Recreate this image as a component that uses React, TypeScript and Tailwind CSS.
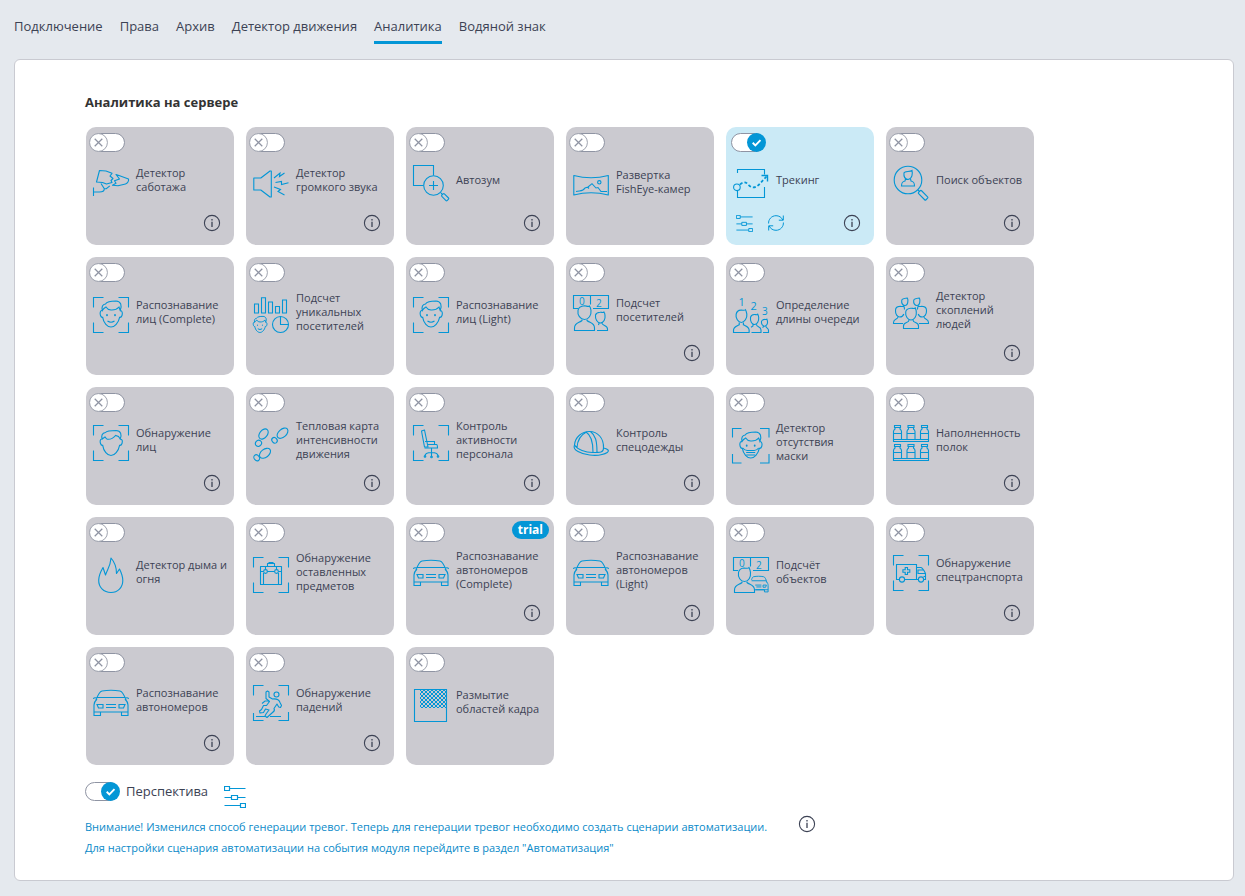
import React, { useState } from "react";
import clsx from "clsx";

interface Detector {
  id: string;
  title: string;
  icon: React.ReactNode;
  info?: boolean;
  trial?: boolean;
}

/* Shared icon parts */

const Corners = () => (
  <path d="M.5 10.500V.5h10M25.500.5h10v10M35.500 25.500v10h-10M10.500 35.500H.5v-10" />
);

const FaceOutline = () => (
  <>
    <path d="M9.300 13.500C7 13 6.800 16.500 7.500 18.500c.5 1.500 1.300 2 2.200 1.800C10.500 26 14.500 30 18 30s7.500-4 8.600-9.700c1.200.2 2-.5 2.400-1.800.8-2.500.2-5-1.800-5" />
    <path d="M9.300 13.500C8.500 10 9.500 7.300 12.500 7 14 4.500 18 4 23 4c5 .3 6.200 4.500 4.200 9.500L26 10c-2 2.300-5 3.200-8 3-3-.2-4-1.300-5-3-1.200.6-2.700 1.700-3.700 3.500z" />
  </>
);

const FaceDetails = () => (
  <>
    <path d="M14 18v.3M22 18v.3" strokeWidth="1.800" strokeLinecap="round" />
    <path d="M14.500 24q3.500 2.500 7 0" />
  </>
);

// Head and shoulders, 16 x 25 units
const Person = () => (
  <>
    <path d="M3 5.500C2.300 9.500 5 14 8 14s5.800-4.500 5.300-8.500C13 3.800 13 2.500 12 .8 11 2 9.500 1 7.500 1.200 5 1.300 3.500 3 3 5.500z" />
    <path d="M6 14v2.500C3 18 .5 18.500.5 22v2.500h15V22c0-3.500-2.500-4-5.500-5.500V14" />
  </>
);

const Car = () => (
  <>
    <path d="M3 15C5 9.500 6.500 6.500 9 6c6-1 12-1 18 0 2.500.5 4 3.500 6 9M4.500 12.500h27M.5 14c0-1.500 2.500-1.500 3.500-.5M35.500 14c0-1.500-2.500-1.500-3.500-.5" />
    <path d="M4 14C2 16 1 17.500 1 20v10.500h6.500V27h21v3.500H35V20c0-2.500-1-4-3-6M1 27h34" />
    <path d="M4 19.500h6v3.500H5.500zM32 19.500h-6v3.500h4.500zM13 19.500h10M13 22.500h10" />
  </>
);

const Bottle = () => (
  <path d="M1.500.5h6v2h-6zM2 2.500v1.500C1 4.800.5 5.500.5 6.500v8h8v-8c0-1-.5-1.700-1.500-2.500V2.500M.5 8.500h8" />
);

const CounterBoard = () => (
  <>
    <path d="M5 13.500H.5V.5h35v13H20M17.500.5v9" />
    <text x="6" y="10" fontSize="10" fill="currentColor" stroke="none">0</text>
    <text x="23" y="12" fontSize="10" fill="currentColor" stroke="none">2</text>
  </>
);

const icons = {
  sabotage: (
    <>
      <path d="M6.500 5.500 13 6l6 2.300-2 2.700 3 2.500-2 2 1 2-5.500 1.500-4-1.500-6-.5z" strokeLinejoin="round" />
      <path d="M23 9.500l3 1 9.500 3.500c.5 2-1 4.500-3 5L25 20.800l-5.500-.5 3.500-2-1.500-2.500 5-1.800z" strokeLinejoin="round" />
      <path d="M.5 22.500v8.500M.5 27h6c3 0 4.800-1.300 4.800-3.300L8 18.500M11.300 23.700h2l3.500-2.800" />
    </>
  ),
  sound: (
    <>
      <path d="M.8 13h7L17 6h1.300v26H17l-9.200-7h-7z" strokeLinejoin="round" />
      <path d="M21 13l6-5-.5 3.500L31.500 8M22.500 17.500l6-1v3l7-1.700M21 22l6.500 2.500-2.500 2 6.500 3.500" />
    </>
  ),
  zoom: (
    <>
      <path d="M10.500 20.500H.5V.5h20v10" />
      <circle cx="20.500" cy="20.500" r="9.800" />
      <path d="M20.500 16v9M16 20.500h9M28 28l1.500 1.500" />
      <rect x="28.500" y="30.200" width="7.500" height="3.600" rx=".8" transform="rotate(45 32 32)" />
    </>
  ),
  fisheye: (
    <>
      <path d="M.8 8.500q17.200 4.500 34.500 0v19.500q-17.300-4.500-34.500 0z" strokeLinejoin="round" />
      <circle cx="26.300" cy="15.300" r="1.700" />
      <path d="M3 24.500c5-1 7 0 9-3.500l3-1 4-3.300 4 4.300 2-.5 3 4h6M14.500 20l1.500 1.500" />
    </>
  ),
  tracking: (
    <>
      <path d="M4.500 8V4.500h27v5M4.500 26v6.500h27V22" />
      <circle cx="3.900" cy="22.300" r="3.300" />
      <path d="M7 19.500c4-3.500 6-2.500 9 .8 3 3 7 3 11-1.800L34 11" strokeWidth="1.700" strokeDasharray="3 2" />
      <path d="M28.500 10.500h6v6" strokeWidth="1.400" />
    </>
  ),
  search: (
    <>
      <circle cx="15" cy="15" r="13.800" />
      <path d="M11 8c0-2 6-1 8-2.500.8 3 .3 8.500-4 9-3.500-.5-4.300-4-4-6.500zM12.500 14l-.5 2c-2 .5-3.500 1-3.500 5h13c0-4-1.500-4.500-3.500-5l-.5-2M25 25l1.500 1.500" />
      <rect x="25" y="28" width="10.500" height="4.200" rx="1" transform="rotate(45 30 30)" />
    </>
  ),
  face: (
    <>
      <Corners />
      <FaceOutline />
      <FaceDetails />
    </>
  ),
  faceDetect: (
    <>
      <Corners />
      <path d="M9.300 14c-2.300-.5-2.500 2.500-1.800 4.500.5 1.500 1.300 2 2.200 1.800C10.500 26 14.500 30.500 18 30.500s7.500-4.500 8.600-10.200c1.200.2 2-.5 2.400-1.800.8-2.500.2-4.500-1.800-4.500" />
      <path d="M9.300 14C8 11 9 8 12.500 7.500 14 5.500 18 5.500 23 5.500c5 .3 6 4 4.200 8.500l-1.700-2.500-3-1c-2 2.500-5 4-8 3.800-1.500-.3-1.500-1.500-2.500-2.300z" />
    </>
  ),
  unique: (
    <>
      <path d="M1.500 7h4v9h-4zM8.500.8h4V16h-4zM15.500 5h4v11h-4zM22.500 9.500h4V16h-4zM29.500 3h4v13h-4z" />
      <g transform="translate(-4.200 16.900) scale(.62)" strokeWidth="1.600">
        <FaceOutline />
        <FaceDetails />
      </g>
      <circle cx="27.500" cy="27.500" r="8" />
      <path d="M27.500 19.500v8h8" />
    </>
  ),
  visitors: (
    <>
      <CounterBoard />
      <path d="M5 15.500c-.8 4.500 2.300 9 6.500 9s7-4.500 6.500-9c-.3-2-.5-3-1.500-4.500-1 1-3 0-5-.200-3.500.2-6 1.700-6.500 4.700z" />
      <path d="M9 24.500v1C6.500 28 1.500 27.500 1.500 33v2.500h20V33c0-5.500-5-5-7.500-7.500v-1" />
      <path d="M22.500 20c-.5 4 1.800 8 5 8s5-4 4.500-7.500c0-1.500-.3-2.500-1-3.500-1 1-2.500 0-4 .3-2.500.2-4 1.200-4.500 2.700zM26 28l-.5 2M29 28c0 3 5.500 2 5.500 6v1.500H24" />
    </>
  ),
  queue: (
    <>
      <text x="5.500" y="8.500" fontSize="11" fill="currentColor" stroke="none">1</text>
      <text x="17.500" y="13" fontSize="11" fill="currentColor" stroke="none">2</text>
      <text x="29" y="18" fontSize="10" fill="currentColor" stroke="none">3</text>
      <g transform="translate(0 12) scale(1.040 .96)">
        <Person />
      </g>
      <path d="M17.500 20.500c-.5 4 1.500 7 4 7s4.500-3 4.200-7c-.1-1.500-.2-2-.9-3.300-.8 1-2 .2-3.500.3-2.200.1-3.500 1.200-3.800 3zM20 27.500v1.500l-2 1.200M23.500 27.500c0 3 4.500 1.500 4.500 5.500v2.500h-9.500" />
      <path d="M28.500 24.500c-.3 2.500 1.200 4.700 3 4.700s3.300-2.200 3-4.700c-.1-1.200-.2-1.500-.6-2.300-.6.6-1.400.1-2.400.2-1.600.1-2.700.8-3 2.100zM30.500 29.200l-.8 1.500M33 29.200c0 2 2.500 1.800 2.500 4v2.300H30" />
    </>
  ),
  crowd: (
    <>
      <path d="M8.700 5.500c-.4 3 1.300 5 3 5s3.200-2 3.200-5c0-1-.2-1.800-.6-2.500-3 .3-5.300.5-5.600 2.500zM20.700 5.500c-.4 3 1.300 5 3 5s3.200-2 3.200-5c0-1-.2-1.800-.6-2.500-3 .3-5.300.5-5.600 2.500z" />
      <path d="M11.500 14.500c0-1.500-.2-2.500-.7-3.500-1 1-2.500.2-4.300.4-2.500.2-4 1.600-4 4.100-.2 3.800 1.800 6.500 4.300 6.500 2 0 3.300-1 4-3M24.500 14.500c0-1.500.2-2.500.7-3.500 1 1 2.500.2 4.300.4 2.500.2 4 1.600 4 4.100.2 3.800-1.800 6.500-4.300 6.500-2 0-3.300-1-4-3" />
      <path d="M5 22c0 2.500-4.500 1.500-4.500 5.500v1H10M31 22c0 2.500 4.500 1.500 4.500 5.500v1H26" />
      <path d="M12.700 17c-.5 4 2 8 5.300 8s5.800-4 5.300-8c0-1.500-.3-2.500-1-4-1 1-2.500.2-4.500.3-3 .2-4.800 1.500-5.100 3.700zM16 25c0 3.500-5.500 1.500-5.500 6v2.500h15V31c0-4.500-5.500-2.500-5.500-6" />
    </>
  ),
  heatmap: (
    <>
      <ellipse cx="10.500" cy="9" rx="5.800" ry="3.800" transform="rotate(-50 10.500 9)" />
      <ellipse cx="5.500" cy="18.300" rx="3.200" ry="2.900" transform="rotate(-50 5.500 18.300)" />
      <ellipse cx="29.500" cy="8.200" rx="6.400" ry="3.900" transform="rotate(-42 29.500 8.200)" />
      <ellipse cx="21.500" cy="15.300" rx="3" ry="2.500" transform="rotate(50 21.500 15.300)" />
      <ellipse cx="12" cy="28.300" rx="6.300" ry="4" transform="rotate(-38 12 28.300)" />
      <ellipse cx="3.700" cy="32.800" rx="3.200" ry="2.600" transform="rotate(50 3.700 32.800)" />
    </>
  ),
  chair: (
    <>
      <Corners />
      <path d="M8.500 6l3-1 3.500 17h-3.500z" strokeLinejoin="round" />
      <path d="M12 16.500h9.500v3h-7.500M14 19.500h9.500q1 0 1 3.500H11.500M18.500 23v4.500M12 31c0-3 4-3.500 6.500-3.500S25 28 25 31M18.500 27.500v4" />
      <circle cx="12" cy="31.500" r=".8" />
      <circle cx="18.500" cy="32" r=".8" />
      <circle cx="25" cy="31.500" r=".8" />
    </>
  ),
  helmet: (
    <>
      <path d="M1.500 20C2 12 9 6.500 16.500 6.500c8 0 14.500 6.500 14 16.500M1.500 20c-1 2.500.5 5 3.500 6.500 6 3.500 17 5 24 3 4.500-1 7.500-3 6-4.500-1.200-1.200-3-1.500-4.500-2" />
      <path d="M1.500 20c3 4.500 11 7.500 18 7.500 4 0 6.500 0 8.500-.5 1.500-.3 2.500-2 2.500-4M13 7c5 3 7 8.500 7 20M17.500 6.500c5 4 6.500 9 6.500 21M4 22.500C4.500 15 8.500 9.500 13.500 7" />
    </>
  ),
  mask: (
    <>
      <path d="M-.5 10.500v-9h9M27 1.500h9v9M36 27v9h-9M8.500 36h-9v-9" />
      <g transform="translate(-.3 1)">
        <FaceOutline />
        <path d="M10 20c1.500 1.800 3 2.500 4.500 2.500h7c1.500 0 3-.7 4.500-2.500M13.500 24.500h9M13.500 27h9" />
        <path d="M14 17.500v.3M22 17.500v.3" strokeWidth="1.800" strokeLinecap="round" />
      </g>
    </>
  ),
  shelves: (
    <>
      {[0, 19].map((y) => (
        <g key={y} transform={`translate(0 ${y})`}>
          <Bottle />
          <g transform="translate(13.500 0)">
            <Bottle />
          </g>
          <g transform="translate(27 0)">
            <Bottle />
          </g>
          <path d="M.5 14.500h35v2H.5z" />
        </g>
      ))}
    </>
  ),
  fire: (
    <path
      d="M18 35.500c-7.500 0-12.500-5.500-12.300-12.500.1-5 2-8.500 4.300-12.500l2.500 7.500c2-6 5-9 5.500-17 4 4.500 5.500 9.500 5.500 15.500l3-4.500c2 4 3.300 7 3.300 11.500 0 7-5 12-11.800 12z"
      strokeLinejoin="round"
    />
  ),
  luggage: (
    <>
      <Corners />
      <path d="M7.500 9.500h21v18h-21zM14.500 9.500v-3h7v3M15.500 5.500h5M12.500 9.500v3M23.500 9.500v3M10.500 16v11.500M25.500 16v11.500" strokeLinejoin="round" />
      <path d="M7.500 14.500h3M14.500 14.500h7M25.500 14.500h3" />
      <circle cx="12.500" cy="14.500" r="1.900" />
      <circle cx="23.500" cy="14.500" r="1.900" />
    </>
  ),
  car: <Car />,
  objects: (
    <>
      <CounterBoard />
      <path d="M5.500 15.500c-.8 4.500 2 9 6 9s6.500-4.500 6-9c-.3-2-.5-3-1.500-5-1 1.500-3 .5-5 .5-3.200.2-5 1.500-5.500 4.500z" />
      <path d="M9 24.500v1c-2.500 2.500-7.500 2-7.500 7.500v2.500h20V33c0-5.500-5-5-7.500-7.500v-1" />
      <g transform="translate(15.500 16) scale(.56 .62)" strokeWidth="1.600">
        <path d="M5.500 11C6.500 7.500 7.500 6.300 9 6c6-1 12-1 18 0 2.500.5 4 3.500 6 9.500M5.500 12.500h26" />
        <path d="M32 14c2 2 3 3.500 3 6v10.500h-6.500V27H12M12 27h23M32 19.500h-6v3.500h4.500zM12 19.500h11M14 22.500h9" />
      </g>
    </>
  ),
  ambulance: (
    <>
      <Corners />
      <path d="M6 24.500H3.500v-15h20v15H12M23.500 12.500H28c2 .5 3.500 4 4.500 6v6h-1.500M25 24.500h-1.500M32.500 18.500h-7.500v-3.500h5.500M32.500 21.500h-2" />
      <circle cx="9" cy="24.500" r="2.600" />
      <circle cx="28" cy="24.500" r="2.600" />
      <path d="M12.200 12.500h2.300v2.300h2.300v2.400h-2.300v2.300h-2.300v-2.300H9.900v-2.400h2.300z" />
    </>
  ),
  fall: (
    <>
      <path d="M.5 10.500V.5h10M25.500.5h10v10M35.500 27v8.500h-10M10.500 35.500H.5V28M3 31.500h9M17 31.500h11" />
      <circle cx="23.500" cy="9.500" r="2.500" />
      <path
        d="M13 7l1.500-1 1.500 1v5l3.500 2c4.500-.5 6.500.5 7.500 3.500l1.500 3-1 2-1.800-.5-1.700-3-3 4.500c1 1.500 0 3-1.500 4l-5.500 5-2-1.500 1-2 3-4-3.500-1-2 3.500-3.500.5-.5-2 2-1.500 2-4h3l3-4-3.500-3z"
        strokeLinejoin="round"
      />
      <path d="M9 18.500l3-2.500h4" />
    </>
  ),
  blur: (
    <>
      <defs>
        <pattern id="checks" width="4" height="4" patternUnits="userSpaceOnUse">
          <path d="M0 0h2v2H0zM2 2h2v2H2z" fill="currentColor" stroke="none" />
        </pattern>
      </defs>
      <rect x="7" y="3" width="26" height="18" fill="url(#checks)" stroke="none" />
      <path d="M1.500 2.500h32v32h-32z" />
    </>
  ),
};

const detectors: Detector[] = [
  { id: "sabotage", title: "Детектор саботажа", icon: icons.sabotage, info: true },
  { id: "sound", title: "Детектор громкого звука", icon: icons.sound, info: true },
  { id: "zoom", title: "Автозум", icon: icons.zoom, info: true },
  { id: "fisheye", title: "Развертка FishEye-камер", icon: icons.fisheye },
  { id: "tracking", title: "Трекинг", icon: icons.tracking, info: true },
  { id: "search", title: "Поиск объектов", icon: icons.search, info: true },
  { id: "face-complete", title: "Распознавание лиц (Complete)", icon: icons.face },
  { id: "unique", title: "Подсчет уникальных посетителей", icon: icons.unique },
  { id: "face-light", title: "Распознавание лиц (Light)", icon: icons.face },
  { id: "visitors", title: "Подсчет посетителей", icon: icons.visitors, info: true },
  { id: "queue", title: "Определение длины очереди", icon: icons.queue },
  { id: "crowd", title: "Детектор скоплений\nлюдей", icon: icons.crowd, info: true },
  { id: "face-detect", title: "Обнаружение\nлиц", icon: icons.faceDetect, info: true },
  { id: "heatmap", title: "Тепловая карта интенсивности движения", icon: icons.heatmap, info: true },
  { id: "staff", title: "Контроль активности персонала", icon: icons.chair, info: true },
  { id: "workwear", title: "Контроль спецодежды", icon: icons.helmet, info: true },
  { id: "mask", title: "Детектор отсутствия\nмаски", icon: icons.mask },
  { id: "shelves", title: "Наполненность полок", icon: icons.shelves, info: true },
  { id: "fire", title: "Детектор дыма и огня", icon: icons.fire },
  { id: "luggage", title: "Обнаружение оставленных предметов", icon: icons.luggage },
  { id: "plates-complete", title: "Распознавание автономеров (Complete)", icon: icons.car, info: true, trial: true },
  { id: "plates-light", title: "Распознавание автономеров (Light)", icon: icons.car, info: true },
  { id: "objects", title: "Подсчёт\nобъектов", icon: icons.objects },
  { id: "special", title: "Обнаружение спецтранспорта", icon: icons.ambulance, info: true },
  { id: "plates", title: "Распознавание автономеров", icon: icons.car, info: true },
  { id: "fall", title: "Обнаружение падений", icon: icons.fall, info: true },
  { id: "blur", title: "Размытие областей кадра", icon: icons.blur },
];

const tabs = ["Подключение", "Права", "Архив", "Детектор движения", "Аналитика", "Водяной знак"];

interface ToggleProps {
  id: string;
  checked: boolean;
  onChange: () => void;
}

function Toggle({ id, checked, onChange }: ToggleProps) {
  return (
    <span className="relative block h-[19px] w-[34px] shrink-0">
      <input
        id={id}
        type="checkbox"
        checked={checked}
        onChange={onChange}
        className="block h-[19px] w-[34px] cursor-pointer appearance-none rounded-full border border-[#8f94a3] bg-white"
      />
      <svg
        viewBox="0 0 20 20"
        className={clsx(
          "pointer-events-none absolute top-0 size-[19px]",
          checked ? "-right-px" : "-left-0.5"
        )}
        fill="none"
      >
        {checked ? (
          <>
            <circle cx="10" cy="10" r="10" fill="#0396d6" />
            <path d="M6 10.300l2.800 2.700L14.200 7.500" stroke="#fff" strokeWidth="2" />
          </>
        ) : (
          <>
            <circle cx="10" cy="10" r="9.400" fill="#fff" stroke="#9a9eab" />
            <path d="M6 6l8 8M14 6l-8 8" stroke="#8f94a3" strokeWidth="1.300" />
          </>
        )}
      </svg>
    </span>
  );
}

function InfoButton() {
  return (
    <button type="button" aria-label="Информация" className="cursor-pointer text-[#3c4254]">
      <svg viewBox="0 0 16 16" className="size-4 overflow-visible" fill="none" stroke="currentColor">
        <circle cx="8" cy="8" r="7.600" strokeWidth="1.100" />
        <path d="M8 6.800V12M8 4v1.500" strokeWidth="1.300" />
      </svg>
    </button>
  );
}

function SettingsButton({ className }: { className: string }) {
  return (
    <button type="button" aria-label="Настройки" className="cursor-pointer text-[#0396d6]">
      <svg viewBox="0 0 22 22" className={className} fill="none" stroke="currentColor" strokeWidth="1.200">
        <path d="M.5.5h5v4h-5zM5.500 2.500h16M.5 11.500h7M7.500 9.500h6v4h-6zM13.500 11.500h8M.5 19.500h16M16.500 17.500h5v4h-5z" />
      </svg>
    </button>
  );
}

function RefreshButton() {
  return (
    <button type="button" aria-label="Обновить" className="cursor-pointer text-[#0396d6]">
      <svg viewBox="0 0 16 16" className="size-4 overflow-visible" fill="none" stroke="currentColor">
        <path d="M.6 8.500C.3 4.500 3.500.7 8 .7c3 0 5.500 1.500 6.800 4.300M15.400 7.500c.3 4-2.900 7.800-7.400 7.800-3 0-5.500-1.500-6.800-4.300M15.300.5v4.700h-4.500M.7 15.500v-4.700h4.500" />
      </svg>
    </button>
  );
}

interface DetectorCardProps {
  detector: Detector;
  enabled: boolean;
  onToggle: () => void;
}

function DetectorCard({ detector, enabled, onToggle }: DetectorCardProps) {
  return (
    <div
      className={clsx(
        "flex h-[118px] w-[148px] flex-col rounded-[10px] pt-[6px] pl-[5px]",
        enabled ? "bg-[#cbeaf6]" : "bg-[#cbcad0]"
      )}
    >
      <div className="flex h-5 items-start justify-between pr-[5px]">
        <Toggle id={detector.id} checked={enabled} onChange={onToggle} />
        {detector.trial && (
          <span className="-mt-[2px] rounded-full bg-[#0396d6] px-[6px] text-xs leading-[18px] font-bold text-white">
            trial
          </span>
        )}
      </div>
      <div className={clsx("flex items-center gap-[7px] pl-0.5", detector.info ? "mt-3" : "mt-[14px]")}>
        <svg
          viewBox="0 0 36 36"
          className="size-9 shrink-0 overflow-visible text-[#0396d6]"
          fill="none"
          stroke="currentColor"
          strokeWidth="1.100"
        >
          {detector.icon}
        </svg>
        <label htmlFor={detector.id} className="h-9 min-w-0 flex-1 cursor-pointer">
          <span className="-mt-1 flex h-[38px] items-center text-[11px] leading-[14px] whitespace-pre-line">
            {detector.title}
          </span>
        </label>
      </div>
      {detector.info && (
        <div className="mt-[14px] flex h-4 items-center justify-between pr-[14px] pl-[5px]">
          <div className="flex gap-[15px]">
            {enabled && (
              <>
                <SettingsButton className="size-[17px]" />
                <RefreshButton />
              </>
            )}
          </div>
          <InfoButton />
        </div>
      )}
    </div>
  );
}

export default function App() {
  const [activeTab, setActiveTab] = useState("Аналитика");
  const [enabled, setEnabled] = useState<string[]>(["tracking"]);
  const [perspective, setPerspective] = useState(true);

  const toggleDetector = (id: string) => {
    setEnabled((prev) => (prev.includes(id) ? prev.filter((item) => item !== id) : [...prev, id]));
  };

  return (
    <div className="flex min-h-screen flex-col bg-[#e5e9ee] pr-[11px] pb-[15px] pl-[14px] font-['Open_Sans',sans-serif] text-[#3c4254]">
      {/* Tabs */}
      <nav className="flex gap-[17px] pt-[15px]">
        {tabs.map((tab) => (
          <button
            key={tab}
            type="button"
            onClick={() => setActiveTab(tab)}
            className={clsx(
              "h-[29px] cursor-pointer border-b-[3px] pb-1 text-[13px] leading-5",
              tab === activeTab ? "border-[#0396d6]" : "border-transparent"
            )}
          >
            {tab}
          </button>
        ))}
      </nav>

      <main className="mt-[15px] flex-1 rounded-md border border-[#c9cad1] bg-white px-[70px] pt-8 pb-5">
        <h1 className="text-[13px] leading-5 font-bold text-[#333]">Аналитика на сервере</h1>

        <div className="mt-[15px] ml-px flex max-w-[960px] flex-wrap gap-3">
          {detectors.map((detector) => (
            <DetectorCard
              key={detector.id}
              detector={detector}
              enabled={enabled.includes(detector.id)}
              onToggle={() => toggleDetector(detector.id)}
            />
          ))}
        </div>

        {/* Perspective */}
        <div className="mt-[17px] flex items-start">
          <Toggle id="perspective" checked={perspective} onChange={() => setPerspective(!perspective)} />
          <label htmlFor="perspective" className="ml-[7px] cursor-pointer text-[13px] leading-[18px]">
            Перспектива
          </label>
          <span className="mt-1 ml-4 flex">
            <SettingsButton className="size-[22px]" />
          </span>
        </div>

        <div className="mt-2 flex items-start gap-8 text-[11px] leading-[21px] text-[#0a8ac9]">
          <div>
            <p>
              Внимание! Изменился способ генерации тревог. Теперь для генерации тревог необходимо создать сценарии
              автоматизации.
            </p>
            <p>Для настройки сценария автоматизации на события модуля перейдите в раздел "Автоматизация"</p>
          </div>
          <InfoButton />
        </div>
      </main>
    </div>
  );
}
